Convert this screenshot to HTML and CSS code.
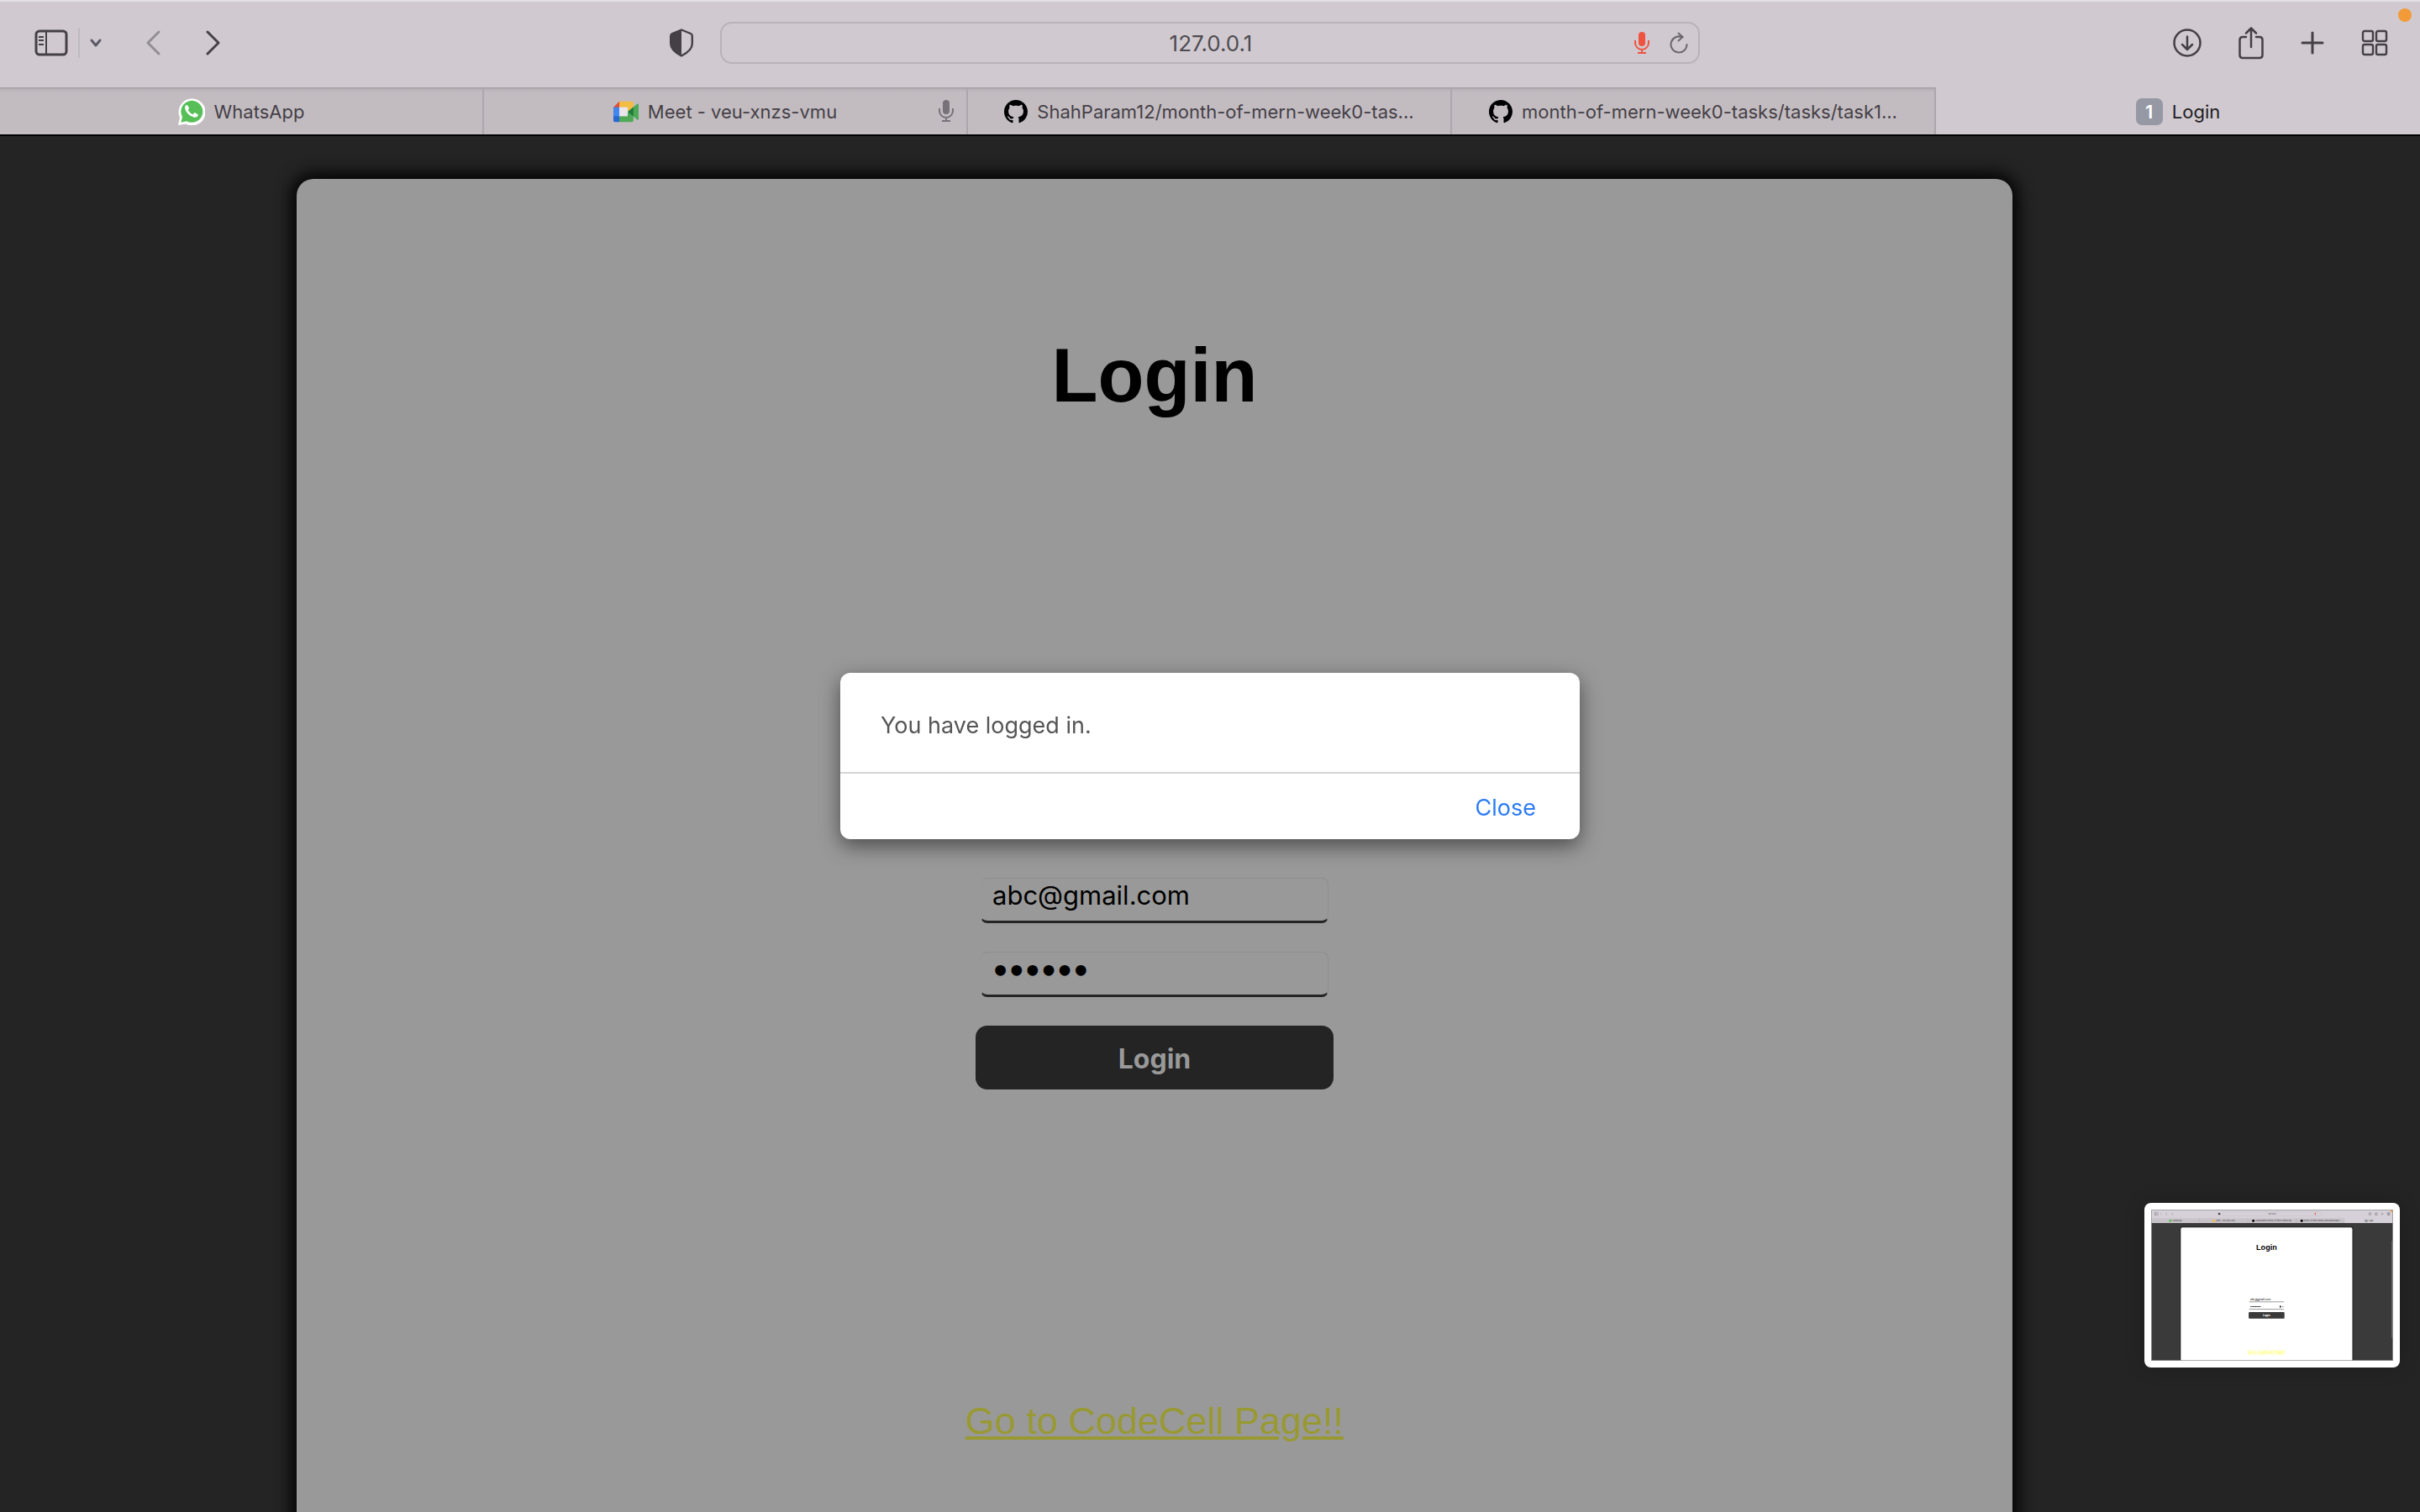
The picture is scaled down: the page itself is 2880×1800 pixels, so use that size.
FILE: index.html
```html
<!DOCTYPE html>
<html lang="en">
<head>
<meta charset="utf-8">
<title>Login</title>
<link rel="stylesheet" href="styles.css">
</head>
<body>
<svg class="defs" aria-hidden="true">
  <symbol id="mic" viewBox="0 0 18 26">
    <rect x="5" y="0" width="8" height="17" rx="4" fill="currentColor"/>
    <path d="M1 10v3a8 8 0 0 0 16 0v-3M9 21v4M4 25h10" fill="none" stroke="currentColor" stroke-width="2"/>
  </symbol>
  <symbol id="github" viewBox="0 0 16 16">
    <path fill="#000" d="M8 0C3.58 0 0 3.58 0 8c0 3.54 2.29 6.53 5.47 7.59.4.07.55-.17.55-.38 0-.19-.01-.82-.01-1.49-2.01.37-2.53-.49-2.69-.94-.09-.23-.48-.94-.82-1.13-.28-.15-.68-.52-.01-.53.63-.01 1.08.58 1.23.82.72 1.21 1.87.87 2.33.66.07-.52.28-.87.51-1.07-1.78-.2-3.64-.89-3.64-3.95 0-.87.31-1.59.82-2.15-.08-.2-.36-1.02.08-2.12 0 0 .67-.21 2.2.82.64-.18 1.32-.27 2-.27s1.36.09 2 .27c1.53-1.04 2.2-.82 2.2-.82.44 1.1.16 1.92.08 2.12.51.56.82 1.27.82 2.15 0 3.07-1.87 3.75-3.65 3.95.29.25.54.73.54 1.48 0 1.07-.01 1.93-.01 2.2 0 .21.15.46.55.38A8.01 8.01 0 0 0 16 8c0-4.42-3.58-8-8-8z"/>
  </symbol>
</svg>

<header class="toolbar">
  <div class="tools tools-left">
    <button class="tool" aria-label="Sidebar"><svg width="40" height="32" viewBox="0 0 40 32" fill="none" stroke="currentColor"><rect x="2" y="2" width="36" height="28" rx="4" stroke-width="3"/><path d="M14 2v28" stroke-width="2"/><path d="M5 9h6M5 13h6M5 18h6" stroke-width="2"/></svg></button>
    <span class="rule"></span>
    <button class="tool menu" aria-label="Tab groups"><svg width="16" height="12" viewBox="0 0 16 12" fill="none" stroke="currentColor" stroke-width="3" stroke-linecap="round" stroke-linejoin="round"><path d="M3 3l5 6 5-6"/></svg></button>
    <button class="tool back" aria-label="Back" disabled><svg width="20" height="32" viewBox="0 0 20 32" fill="none" stroke="currentColor" stroke-width="3" stroke-linecap="round" stroke-linejoin="round"><path d="M17 3L4 16l13 13"/></svg></button>
    <button class="tool forward" aria-label="Forward"><svg width="20" height="32" viewBox="0 0 20 32" fill="none" stroke="currentColor" stroke-width="3" stroke-linecap="round" stroke-linejoin="round"><path d="M3 3l13 13L3 29"/></svg></button>
    <button class="tool shield" aria-label="Privacy report"><svg width="28" height="34" viewBox="0 0 28 34"><path d="M14 1.500L25 6q1.800.8 1.800 3v9c0 7-6 11-12.800 14.500C7.200 29 1.200 25 1.200 18V9q0-2.200 1.800-3z" fill="none" stroke="currentColor" stroke-width="2.400" stroke-linejoin="round"/><path d="M14 1L3 6Q1 7 1 9v9c0 7 6 11 13 15z" fill="currentColor"/></svg></button>
  </div>
  <div class="address">
    <input class="address-text" type="text" aria-label="Address" value="127.0.0.1">
    <div class="address-tools">
      <button class="tool mic-live" aria-label="Microphone in use"><svg width="18" height="26"><use href="#mic"/></svg></button>
      <button class="tool reload" aria-label="Reload"><svg width="22" height="26" viewBox="0 0 22 26" fill="none" stroke="currentColor" stroke-width="2" stroke-linecap="round"><path d="M20.500 15A9.500 9.500 0 1 1 15 6.300"/><path d="M10.500 1.500L15.500 6 10.500 10.500"/></svg></button>
    </div>
  </div>
  <div class="tools tools-right">
    <button class="tool" aria-label="Downloads"><svg width="34" height="34" viewBox="0 0 34 34" fill="none" stroke="currentColor" stroke-width="2.500" stroke-linecap="round" stroke-linejoin="round"><circle cx="17" cy="17" r="15.500"/><path d="M17 9.500v15M11 19l6 6 6-6"/></svg></button>
    <button class="tool" aria-label="Share"><svg width="30" height="40" viewBox="0 0 30 40" fill="none" stroke="currentColor" stroke-width="2.500" stroke-linecap="round" stroke-linejoin="round"><path d="M9 13H5q-3.500 0-3.500 3.500v18Q1.500 38 5 38h20q3.500 0 3.500-3.500v-18Q28.500 13 25 13h-4M15 25V3M9 8.500L15 2.500l6 6"/></svg></button>
    <button class="tool" aria-label="New tab"><svg width="28" height="28" viewBox="0 0 28 28" stroke="currentColor" stroke-width="3" stroke-linecap="round"><path d="M14 2v24M2 14h24"/></svg></button>
    <button class="tool" aria-label="Tab overview"><svg width="32" height="32" viewBox="0 0 32 32" fill="none" stroke="currentColor" stroke-width="2.400"><rect x="2" y="2" width="12" height="12" rx="2"/><rect x="18" y="2" width="12" height="12" rx="2"/><rect x="2" y="18" width="12" height="12" rx="2"/><rect x="18" y="18" width="12" height="12" rx="2"/></svg></button>
  </div>
  <span class="recording-dot"></span>
</header>

<nav class="tabs">
  <a class="tab" href="#"><svg width="32" height="32" viewBox="0 0 32 32"><path fill="#fff" d="M0 32l2-9A16 16 0 1 1 9 30.500z"/><path fill="#57bf58" d="M3.300 28.800l1.700-6.600A13 13 0 1 1 10 27.200z"/><path fill="#fff" d="M11.300 8.500c-.6-1.200-2.500-.3-3 1.300-.6 1.600-.1 3.500 1.200 5.600 1.700 2.800 4 5 7.200 6.400 2.300 1 4.300 1.200 5.700.3 1.300-.8 1.800-2.600 1-3.200l-3.200-1.700c-.7-.3-1 .2-1.800 1.200-.5.700-1 .6-1.700.3-2-1-3.500-2.500-4.600-4.300-.4-.7 0-1 .5-1.700.4-.5.5-.9.3-1.500z"/></svg><span class="tab-title">WhatsApp</span></a>
  <a class="tab" href="#"><svg width="30" height="26" viewBox="0 0 87.500 72"><path fill="#1f7d3c" d="M49.500 36l8.530 9.750 11.470 7.330 2-17.020-2-16.640-11.690 6.440z"/><path fill="#2767d3" d="M0 51.500V66c0 3.315 2.685 6 6 6h14.500l3-10.960-3-9.540-9.950-3z"/><path fill="#dd4d3d" d="M20.500 0L0 20.500l10.550 3 9.950-3 2.950-9.410z"/><path fill="#4285ed" d="M20.500 20.500H0v31h20.500z"/><path fill="#4ea956" d="M82.600 8.680L69.500 19.420v33.660l13.160 10.790c1.970 1.540 4.850.135 4.850-2.370V11c0-2.535-2.945-3.925-4.910-2.320zM49.500 36v15.500h-29V72h43c3.315 0 6-2.685 6-6V53.080z"/><path fill="#f3bc42" d="M63.500 0h-43v20.500h29V36l20-16.570V6c0-3.315-2.685-6-6-6z"/><path fill="#e8e6ea" d="M20.500 20.500h29v31h-29z"/></svg><span class="tab-title">Meet - veu-xnzs-vmu</span><svg class="tab-mic" width="18" height="26"><use href="#mic"/></svg></a>
  <a class="tab" href="#"><svg width="28" height="28"><use href="#github"/></svg><span class="tab-title">ShahParam12/month-of-mern-week0-tas...</span></a>
  <a class="tab" href="#"><svg width="28" height="28"><use href="#github"/></svg><span class="tab-title">month-of-mern-week0-tasks/tasks/task1...</span></a>
  <a class="tab tab-active" href="#"><span class="badge">1</span><span class="tab-title">Login</span></a>
</nav>

<main class="page">
  <section class="card">
    <h1>Login</h1>
    <form class="login">
      <input class="field" type="email" aria-label="Email" value="abc@gmail.com">
      <input class="field field-password" type="password" aria-label="Password" value="abcdef">
      <button class="submit" type="button">Login</button>
    </form>
    <a class="more" href="#">Go to CodeCell Page!!</a>
  </section>
</main>

<dialog class="alert" open>
  <p class="alert-text">You have logged in.</p>
  <div class="alert-actions"><button class="alert-close">Close</button></div>
</dialog>

<aside class="preview">
  <svg class="preview-shot" viewBox="0 0 2880 1800" font-family="Inter, sans-serif">
    <rect width="2880" height="1800" fill="#3a3a3a"/>
    <rect width="2880" height="160" fill="#d6d0d8"/>
    <rect y="104" width="2305" height="56" fill="#c8c2c9"/>
    <path d="M576 104v56M1152 104v56M1728 104v56" stroke="#b8b2b8" stroke-width="6"/>
    <g fill="none" stroke="#6b666d" stroke-width="4">
      <path d="M44 36h36v30H44zM56 36v30M108 48l6 7 6-7M188 38l-13 14 13 14M246 38l13 14-13 14"/>
      <rect x="857" y="28" width="1166" height="48" rx="14" stroke="#c6c0c8"/>
      <circle cx="2604" cy="51" r="15"/>
      <path d="M2604 42v16M2666 42h26v24h-26zM2679 32v24M2738 51h26M2751 38v26M2812 37h28v28h-28zM2826 37v28M2812 51h28"/>
    </g>
    <circle cx="811" cy="51" r="14" fill="#4b464d"/>
    <rect x="1948" y="38" width="12" height="24" fill="#ed5a49"/>
    <circle cx="2862" cy="18" r="12" fill="#f29a3a"/>
    <circle cx="229" cy="133" r="15" fill="#57bf58"/>
    <rect x="731" y="120" width="30" height="26" fill="#f3bc42"/>
    <circle cx="1216" cy="133" r="15"/>
    <circle cx="1792" cy="133" r="15"/>
    <rect x="2544" y="117" width="32" height="32" rx="6" fill="#9698a4"/>
    <g font-size="22" fill="#453f46">
      <text x="1392" y="60" font-size="26">127.0.0.1</text>
      <text x="256" y="141">WhatsApp</text>
      <text x="773" y="141">Meet - veu-xnzs-vmu</text>
      <text x="1243" y="141">ShahParam12/month-of-mern-week0-tas...</text>
      <text x="1818" y="141">month-of-mern-week0-tasks/tasks/task1...</text>
      <text x="2587" y="141">Login</text>
    </g>
    <rect x="345" y="204" width="2058" height="1620" rx="24" fill="#161616"/>
    <rect x="353" y="212" width="2042" height="1620" rx="18" fill="#fff"/>
    <text x="1374" y="478" font-family="Liberation Sans, Arial, sans-serif" font-size="91" font-weight="700" text-anchor="middle">Login</text>
    <text x="1181" y="1077" font-size="32">abc@gmail.com</text>
    <path d="M1167 1098h414M1167 1186h414" stroke="#3a3a3a" stroke-width="5"/>
    <path d="M1183 1155h122" stroke="#000" stroke-width="9" stroke-dasharray="11 3"/>
    <path d="M1530 1144h16v20h-16zM1562 1150h14l-7 9z"/>
    <rect x="1161" y="1221" width="426" height="76" rx="10" fill="#3a3a3a"/>
    <text x="1374" y="1271" font-size="32" font-weight="700" fill="#fff" text-anchor="middle">Login</text>
    <text x="1374" y="1708" font-family="Liberation Sans, Arial, sans-serif" font-size="45" fill="#ff3" text-anchor="middle" text-decoration="underline">Go to CodeCell Page!!</text>
    <rect x="2860" y="370" width="14" height="1160" rx="7" fill="#666"/>
    <rect x="4" y="4" width="2872" height="1792" fill="none" stroke="#999" stroke-width="8"/>
  </svg>
</aside>
</body>
</html>
```
FILE: styles.css
```css
* {
  box-sizing: border-box;
}

body {
  margin: 0;
  height: 100vh;
  overflow: hidden;
  display: flex;
  flex-direction: column;
  background: #242424;
  font-family: Inter, "Liberation Sans", sans-serif;
}

button,
input {
  font-family: inherit;
  margin: 0;
}

svg {
  display: block;
}

.defs {
  position: absolute;
  width: 0;
  height: 0;
}

/* Browser toolbar */
.toolbar {
  position: relative;
  display: grid;
  grid-template-columns: 1fr minmax(0, 1166px) 1fr;
  align-items: center;
  height: 104px;
  flex: none;
  padding-bottom: 4px;
  border-top: 2px solid #e3e0e6;
  background: #d0cad0;
}

.tools {
  display: flex;
  align-items: center;
}

.tools-left {
  padding: 0 32px 0 41px;
}

.tools-right {
  justify-content: flex-end;
  gap: 44px;
  padding-right: 38px;
}

.tool {
  padding: 0;
  border: 0;
  background: none;
  color: #453f46;
}

.rule {
  width: 2px;
  height: 36px;
  margin: 0 11px 0 12px;
  background: #bdbac0;
}

.menu {
  color: #5d5a66;
}

.back {
  margin-left: 50px;
  color: #938d94;
}

.forward {
  margin-left: 52px;
}

.shield {
  margin-left: auto;
}

.address {
  display: flex;
  align-items: center;
  height: 50px;
  padding: 0 12px 0 78px;
  border: 2px solid #b9b3b9;
  border-radius: 14px;
}

.address-text {
  flex: 1;
  min-width: 0;
  padding: 0;
  border: 0;
  background: none;
  color: #4f4b51;
  font-size: 26px;
  text-align: center;
}

.address-tools {
  display: flex;
  align-items: center;
  gap: 24px;
}

.mic-live {
  color: #ef5340;
}

.reload {
  color: #6b666c;
}

.recording-dot {
  position: absolute;
  top: 8px;
  right: 10px;
  width: 16px;
  height: 16px;
  border-radius: 50%;
  background: #f29b38;
}

/* Tab bar */
.tabs {
  display: grid;
  grid-template-columns: repeat(5, 1fr);
  flex: none;
  border-bottom: 2px solid #000;
  background: #d0cad0;
}

.tab {
  position: relative;
  display: flex;
  align-items: center;
  justify-content: center;
  gap: 11px;
  height: 56px;
  padding-top: 2px;
  border-right: 2px solid #aca7ad;
  background: linear-gradient(#9d989d, #b7b1b6 2px, #c2bcc1 6px);
  color: #453f46;
  font-size: 22px;
  text-decoration: none;
  white-space: nowrap;
}

.tab-active {
  border-right: 0;
  background: none;
  color: #221c22;
}

.tab-mic {
  position: absolute;
  top: 15px;
  right: 15px;
  color: #77727a;
}

.badge {
  width: 32px;
  height: 32px;
  border-radius: 7px;
  background: #9698a4;
  color: #fff;
  font-weight: 600;
  line-height: 32px;
  text-align: center;
}

/* Login page */
.page {
  display: grid;
  grid-template-columns: 353fr 2042fr 485fr;
  flex: 1;
  min-height: 0;
  overflow: hidden;
  padding-top: 51px;
}

.card {
  grid-column: 2;
  display: flex;
  flex-direction: column;
  align-items: center;
  align-self: start;
  padding: 182px 0 200px;
  border-radius: 20px;
  background: #999;
  box-shadow: 0 0 20px 6px #000;
}

h1 {
  margin: 0;
  color: #000;
  font-family: "Liberation Sans", Arial, sans-serif;
  font-size: 90px;
  line-height: 104px;
}

.login {
  display: flex;
  flex-direction: column;
  align-items: center;
  gap: 34px;
  width: 426px;
  margin-top: 546px;
}

.field {
  width: 414px;
  height: 54px;
  padding: 0 13px 12px;
  border: 1px solid #8e8e8e;
  border-left-color: #979797;
  border-bottom: 3px solid #242424;
  border-radius: 8px;
  background: none;
  color: #000;
  font-size: 31px;
}

.field-password {
  padding-bottom: 14px;
  font-size: 34px;
  -webkit-text-stroke: 2px #000;
}

.submit {
  width: 100%;
  height: 76px;
  padding: 2px 0 0;
  border: 0;
  border-radius: 14px;
  background: #242424;
  color: #999;
  font-size: 32px;
  font-weight: 700;
}

.more {
  margin-top: 369px;
  color: #999933;
  font-family: "Liberation Sans", Arial, sans-serif;
  font-size: 45px;
  line-height: 52px;
}

/* Alert */
.alert {
  position: fixed;
  inset: 0;
  width: 880px;
  max-width: 100%;
  height: fit-content;
  margin: auto;
  padding: 0;
  border: 0;
  border-radius: 12px;
  background: #fff;
  box-shadow: 0 8px 24px rgba(0, 0, 0, .5);
  font-size: 27px;
  line-height: 36px;
}

.alert-text {
  margin: 0;
  padding: 45px 48px 37px;
  border-bottom: 2px solid #d5d5d5;
  color: #555;
}

.alert-actions {
  display: flex;
  justify-content: flex-end;
  padding: 23px 52px 19px;
}

.alert-close {
  padding: 0;
  border: 0;
  background: none;
  color: #2b7cf6;
  font-size: 27px;
  line-height: 36px;
}

/* Floating capture preview */
.preview {
  position: fixed;
  right: 24px;
  bottom: 172px;
  width: 304px;
  padding: 8px;
  border-radius: 8px;
  background: #fff;
  box-shadow: 0 0 24px rgba(0, 0, 0, .2);
}

.preview-shot {
  width: 100%;
}
```
